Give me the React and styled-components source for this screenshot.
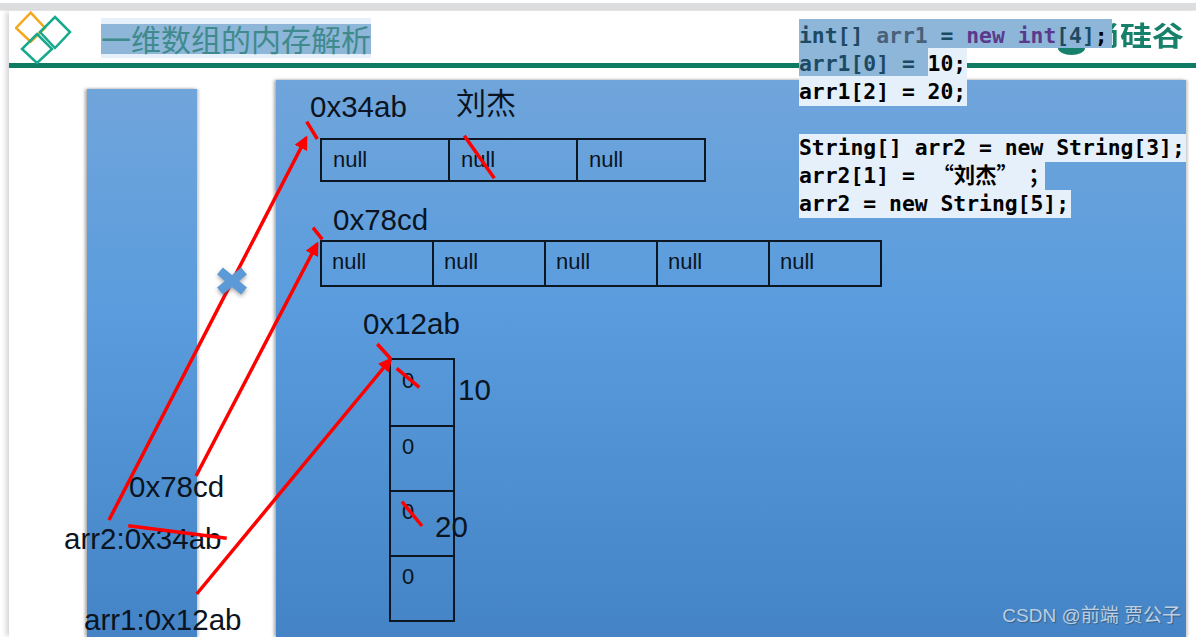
import React from 'react'
import styled, { createGlobalStyle } from 'styled-components'

const Global = createGlobalStyle`
  html, body {
    margin: 0;
    padding: 0;
    background: #fff;
  }
  body {
    width: 1196px;
    height: 637px;
    overflow: hidden;
  }
`

const Viewer = styled.div`
  width: 1196px;
  height: 637px;
  padding: 3px 0 0;
  box-sizing: border-box;
  overflow: hidden;
  background: #fff;
`

const TopEdge = styled.div`
  height: 7px;
  background: #dcdddf;
  border-bottom: 1px solid #eaeaeb;
`

const Slide = styled.div`
  position: relative;
  margin-left: 9px;
  height: 626px;
  background: #fff;
  box-shadow: -4px 0 5px -1px #d4d5d7;
  font-family: 'Liberation Sans', Arial, sans-serif;
  color: #0b1420;
`

const Header = styled.header`
  display: flex;
  align-items: flex-start;
  height: 52px;
  border-bottom: 5px solid #0f7b62;
`

const Logo = styled.svg`
  flex: none;
  width: 62px;
  height: 54px;
  margin-left: 6px;
`

const Title = styled.h1`
  margin: 7px 0 0 24px;
  height: 40px;
  padding: 0;
  font: 400 30px/40px 'Noto Sans CJK SC', sans-serif;
  color: #3f8a8c;
  background: linear-gradient(#e6f0fb 0 6px, #8db6d9 6px 36px, #e6f0fb 36px);
`

const Brand = styled.div`
  position: absolute;
  left: 1079px;
  top: 6px;
  font: 700 32px/40px 'Noto Sans CJK SC', sans-serif;
  color: #16806a;
  transform-origin: top;
  transform: scaleY(0.85);
  clip-path: inset(0 0 0 18px);
`

const BrandArc = styled.div`
  position: absolute;
  left: 1049px;
  top: 37px;
  width: 27px;
  height: 7px;
  border-radius: 0 0 50% 50% / 0 0 100% 100%;
  background: #16806a;
`

const Code = styled.div`
  position: absolute;
  left: 790px;
  top: 11px;
  font: 700 21.37px/28px 'DejaVu Sans Mono', 'Noto Sans CJK SC', monospace;
  color: #000;
  z-index: 3;
`

const CodeLine = styled.div`
  height: 28px;
  width: ${p => p.$width}px;
  background: ${p => p.$bg || '#e6f0fb'};
  box-shadow: ${p => (p.$lift ? '0 -2px 0 #e6f0fb' : 'none')};
  white-space: pre;
`

const Selected = styled.span`
  display: inline-block;
  width: ${p => (p.$width ? `${p.$width}px` : 'auto')};
  height: 26px;
  background: #8db6d9;
  box-shadow: 0 -3px 0 #8db6d9;
  color: #1d4a63;
`

const Tok = styled.span`
  color: ${p => p.$color};
`

const Cjk = styled.span`
  font-family: 'Noto Sans CJK SC', sans-serif;
  line-height: 0;
`

const Body = styled.div`
  display: flex;
  align-items: flex-start;
  padding-left: 78px;
  gap: 79px;
`

const Memory = styled.section`
  position: relative;
  flex: none;
  width: ${p => p.$width}px;
  margin-top: ${p => p.$top}px;
  height: ${p => 569 - p.$top}px;
  background: linear-gradient(#70a5db, #5a9cdd 40%, #4484c6);
  box-shadow: -2px 0 3px #a8a8a8, 2px 0 2px #d4d4d4;
`

const Address = styled.span`
  position: absolute;
  left: ${p => p.$x}px;
  top: ${p => p.$y}px;
  font-size: 29.5px;
  line-height: 34px;
  white-space: nowrap;
`

const CjkValue = styled(Address)`
  font-family: 'Noto Sans CJK SC', sans-serif;
  font-size: 30px;
  line-height: 40px;
`

const ArrayRow = styled.div`
  position: absolute;
  left: ${p => p.$x}px;
  top: ${p => p.$y}px;
  display: flex;
  height: ${p => p.$height}px;
  box-sizing: border-box;
  border: 2px solid #0d1722;
`

const RowCell = styled.div`
  flex: none;
  width: ${p => p.$width}px;
  box-sizing: border-box;
  padding-left: ${p => p.$pad}px;
  font-size: 22px;
  line-height: 40px;
  &:not(:first-child) {
    border-left: 2px solid #0d1722;
  }
`

const ArrayColumn = styled.div`
  position: absolute;
  left: 113px;
  top: 278px;
  width: 66px;
  box-sizing: border-box;
  border: 2px solid #0d1722;
`

const ColumnCell = styled.div`
  height: 65px;
  box-sizing: border-box;
  padding: 6px 0 0 11px;
  font-size: 22px;
  line-height: 30px;
  & + & {
    padding-top: 5px;
    border-top: 2px solid #0d1722;
  }
`

const Cross = styled.svg`
  position: absolute;
  left: 208px;
  top: 257px;
  width: 30px;
  height: 26px;
  overflow: visible;
  z-index: 3;
  filter: drop-shadow(0 2px 2px rgba(60, 60, 60, 0.45));
`

const Annotations = styled.svg`
  position: absolute;
  left: -9px;
  top: -11px;
  width: 1196px;
  height: 637px;
  pointer-events: none;
  z-index: 2;
`

const Watermark = styled.span`
  position: absolute;
  right: 15px;
  bottom: 9px;
  font: 400 19px/24px 'Liberation Sans', 'Noto Sans CJK SC', sans-serif;
  color: #bccfe2;
  text-shadow: 1px 1px 1px #3a5f86;
  white-space: nowrap;
`

const strikes = [
  [306.7, 121.7, 317.3, 139],
  [313, 227.7, 322.3, 239.3],
  [377.3, 344, 390.7, 358.7],
  [128.3, 525.7, 226.7, 538.3],
  [464.3, 135.7, 494.3, 178.3],
  [396.7, 368.3, 419.3, 387.3],
  [402, 501.7, 422, 526],
]

const arrows = [
  [109, 520, 306, 138],
  [196, 476, 317, 244],
  [196.7, 594, 390.5, 359.5],
]

const topCells = [126, 128, 128]
const wideCells = [110, 112, 112, 112, 112]

export default function App() {
  return (
    <Viewer>
      <Global />
      <TopEdge />
      <Slide>
        <Header>
          <Logo viewBox="0 0 62 54">
            <g fill="none" strokeWidth="2.5">
              <path d="M15.7 1.7 30 17 15.7 30.7 1 17Z" stroke="#f5a81c" />
              <path d="M40 6 55 21 40 37 25 21Z" stroke="#17a98c" />
              <path d="M22 23 37 38 22 52 7 38Z" stroke="#17a98c" />
            </g>
          </Logo>
          <Title>一维数组的内存解析</Title>
        </Header>
        <BrandArc />
        <Brand>尚硅谷</Brand>
        <Code>
          <CodeLine $width={322} $bg="transparent">
            <Selected $width={313}>
              <Tok $color="#1d4a63">int[] </Tok>
              <Tok $color="#4a6078">arr1</Tok> = <Tok $color="#5b3a8c">new int</Tok>[4]
              <Tok $color="#000">;</Tok>
            </Selected>
          </CodeLine>
          <CodeLine $width={168} $lift>
            <Selected>arr1[0] = </Selected>10;
          </CodeLine>
          <CodeLine $width={168}>arr1[2] = 20;</CodeLine>
          <CodeLine $width={0} />
          <CodeLine $width={387}>String[] arr2 = new String[3];</CodeLine>
          <CodeLine $width={246}>
            arr2[1] = <Cjk> “刘杰”　；</Cjk>
          </CodeLine>
          <CodeLine $width={272}>arr2 = new String[5];</CodeLine>
        </Code>
        <Body>
          <Memory $width={110} $top={21} />
          <Memory $width={910} $top={12}>
            <Address $x={34} $y={10}>0x34ab</Address>
            <CjkValue $x={180} $y={1}>刘杰</CjkValue>
            <ArrayRow $x={44} $y={58} $height={44}>
              {topCells.map((w, i) => (
                <RowCell key={i} $width={w} $pad={11}>null</RowCell>
              ))}
            </ArrayRow>
            <Address $x={57} $y={123}>0x78cd</Address>
            <ArrayRow $x={44} $y={160} $height={47}>
              {wideCells.map((w, i) => (
                <RowCell key={i} $width={w} $pad={10}>null</RowCell>
              ))}
            </ArrayRow>
            <Address $x={87} $y={227}>0x12ab</Address>
            <ArrayColumn>
              {[0, 1, 2, 3].map(i => (
                <ColumnCell key={i}>0</ColumnCell>
              ))}
            </ArrayColumn>
            <Address $x={182} $y={293}>10</Address>
            <Address $x={159} $y={430}>20</Address>
          </Memory>
        </Body>
        <Cross viewBox="0 0 30 26">
          <path d="M3 3 27 23M27 3 3 23" stroke="#5b9ad6" strokeWidth="9" fill="none" />
        </Cross>
        <Address $x={120} $y={459}>0x78cd</Address>
        <Address $x={55} $y={511}>arr2:0x34ab</Address>
        <Address $x={75} $y={592}>arr1:0x12ab</Address>
        <Annotations viewBox="0 0 1196 637">
          <defs>
            <marker id="head" markerWidth="4" markerHeight="4" viewBox="0 0 5 5" refX="4" refY="2.5" orient="auto">
              <path d="M0 0 5 2.5 0 5Z" fill="#f00" />
            </marker>
          </defs>
          {strikes.map(([a, b, c, d], i) => (
            <line key={i} x1={a} y1={b} x2={c} y2={d} stroke="#f00" strokeWidth="3.5" />
          ))}
          {arrows.map(([a, b, c, d], i) => (
            <line key={i} x1={a} y1={b} x2={c} y2={d} stroke="#f00" strokeWidth="3.5" markerEnd="url(#head)" />
          ))}
        </Annotations>
        <Watermark>CSDN @前端 贾公子</Watermark>
      </Slide>
    </Viewer>
  )
}
